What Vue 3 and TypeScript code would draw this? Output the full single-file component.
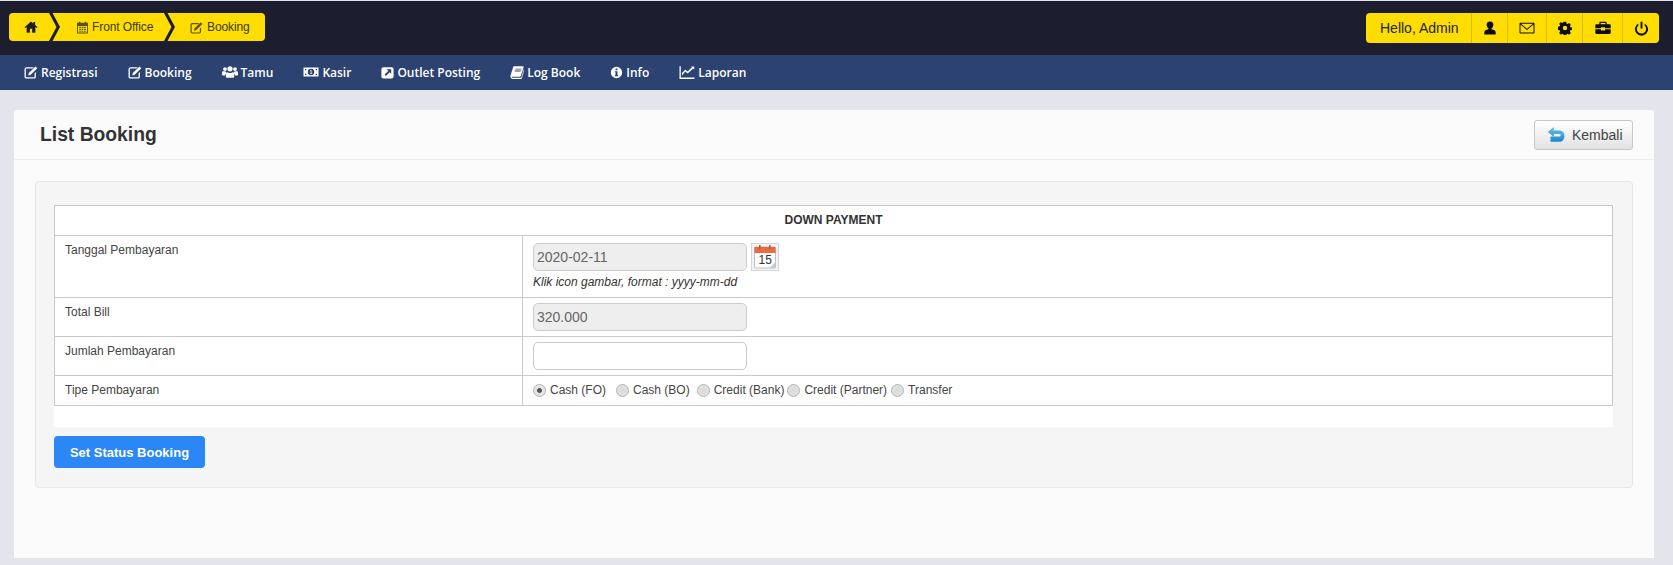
<script setup lang="ts">
const icons: Record<string, string> = {
  edit: 'M3 2.5h8.2L9.7 4H3a.9.9 0 0 0-.9.9v8.2c0 .5.4.9.9.9h8.2c.5 0 .9-.4.9-.9V9.4l1.5-1.5v5.4A2.2 2.2 0 0 1 11.4 15.5H2.8A2.2 2.2 0 0 1 .6 13.3V4.7A2.2 2.2 0 0 1 2.8 2.5zM13.2 1.6l2 2-7.6 7.6-2.8.7.7-2.8z',
  users: 'M8 2.2a2.6 2.6 0 1 1 0 5.2 2.6 2.6 0 0 1 0-5.2zM3 3.2a1.9 1.9 0 1 1 0 3.8 1.9 1.9 0 0 1 0-3.8zM13 3.2a1.9 1.9 0 1 1 0 3.8 1.9 1.9 0 0 1 0-3.8zM0 8.2c0-.6.6-.9 1.4-.9h2c.2.9.6 1.4 1.2 1.8-.9.4-1.4 1.2-1.6 2.5H1.2C.4 11.6 0 11 0 10.2zM16 8.2c0-.6-.6-.9-1.4-.9h-2c-.2.9-.6 1.4-1.2 1.8.9.4 1.4 1.2 1.6 2.5h1.8c.8 0 1.2-.6 1.2-1.4zM5.6 8.2c.7.6 1.5.9 2.4.9s1.7-.3 2.4-.9c1.3.1 1.8 1 1.8 2.6v1.6c0 .9-.5 1.4-1.4 1.4H5.2c-.9 0-1.4-.5-1.4-1.4v-1.6c0-1.6.5-2.5 1.8-2.6z',
  money: 'M.5 3.5h15v9H.5zM2 5v6h1.6A1.8 1.8 0 0 0 2 9.4V6.6A1.8 1.8 0 0 0 3.6 5zM12.4 5A1.8 1.8 0 0 0 14 6.6v2.8a1.8 1.8 0 0 0-1.6 1.6H14V5zM8 4.8a3.2 3.2 0 1 0 0 6.4 3.2 3.2 0 0 0 0-6.4zM7 6.2h1.5v3.2h.8v.7H7v-.7h.7V7.1H7z',
  link: 'M3 1.5h10A2.5 2.5 0 0 1 15.5 4v9a2.5 2.5 0 0 1-2.5 2.5H3A2.5 2.5 0 0 1 .5 13V4A2.5 2.5 0 0 1 3 1.5zM7 4l2 2-4.6 4.6 1.6 1.6 4.6-4.6 2 2V4z',
  book: 'M4.5 1.5h10.3c.7 0 .9.6.7 1.2l-3 9.6c-.3.8-.8 1.2-1.6 1.2H2.6c-.6 0-.8.6-.4.9.2.2.5.2.9.2h9.1c.4 0 .6-.2.8-.6l3-9.6c.4.3.5.8.3 1.4l-2.9 9.6c-.2.8-.9 1.2-1.7 1.2H2.9C1.4 15.3.3 14.2.5 12.6l.1-.9 3-9c.1-.7.4-1.2.9-1.2zM6 4.2v1h6.8l.3-1zM5.4 6.4v1h6.8l.3-1z',
  info: 'M8 1a7 7 0 1 1 0 14A7 7 0 0 1 8 1zM6.8 3v2.2h2.4V3zM6 6.4v1.4h.8v3.4H6v1.4h4v-1.4h-.8V6.4z',
  chart: 'M.5 2.2h1.3v11.4h13.7v1.3H.5zM3 11.6V9l3.2-3.4 2.4 2L13 3.2 12 2.4h3.2v3.2l-1.1-1.2-5.4 5.2-2.4-2L3 11.6z',
  calendar: 'M3.5.8h1.8v1.5h5.4V.8h1.8v1.5h2.3v13H1.2v-13h2.3zM2.4 6v8.1h11.2V6zM4 7h2v1.6H4zm3 0h2v1.6H7zm3 0h2v1.6h-2zM4 9.5h2v1.6H4zm3 0h2v1.6H7zm3 0h2v1.6h-2zM4 12h2v1.3H4zm3 0h2v1.3H7zm3 0h2v1.3h-2z',
  user: 'M8 .6a3.8 3.8 0 0 1 3.8 4c0 1.6-.8 3.2-2.1 4l.2.8c2.8.6 4.6 1.6 4.6 3.5v2.5H1.5v-2.5c0-1.9 1.8-2.9 4.6-3.5l.2-.8c-1.3-.8-2.1-2.4-2.1-4A3.8 3.8 0 0 1 8 .6z',
  mail: 'M1.6 2.8h12.8c.6 0 1.1.5 1.1 1.1v8.6c0 .6-.5 1.1-1.1 1.1H1.6c-.6 0-1.1-.5-1.1-1.1V3.9c0-.6.5-1.1 1.1-1.1zM1.5 4.6v7.8c0 .1.1.2.2.2h12.6c.1 0 .2-.1.2-.2V4.6L8 10zM2 3.8 8 8.8l6-5z',
  cog: 'M6.6.8h2.8l.4 2 1.2.5 1.7-1.1 2 2-1.1 1.7.5 1.2 2 .4v2.8l-2 .4-.5 1.2 1.1 1.7-2 2-1.7-1.1-1.2.5-.4 2H6.6l-.4-2-1.2-.5-1.7 1.1-2-2 1.1-1.7-.5-1.2-2-.4V6.5l2-.4.5-1.2-1.1-1.7 2-2L4.6 2.3l1.2-.5zM8 5.5a2.5 2.5 0 1 0 0 5 2.5 2.5 0 0 0 0-5z',
  case: 'M5.5 1.8h5c.7 0 1.2.5 1.2 1.2v1.3h2.8c.7 0 1.2.5 1.2 1.2v2.7H10v-1H6v1H.3V5.5c0-.7.5-1.2 1.2-1.2h2.8V3c0-.7.5-1.2 1.2-1.2zM5.6 3.1v1.2h4.8V3.1zM.3 9.2H6v1.2h4V9.2h5.7v3.6c0 .7-.5 1.2-1.2 1.2h-13c-.7 0-1.2-.5-1.2-1.2z',
  power: 'M7 .8h2v7.2H7zM4.6 2.6v2.2a5 5 0 1 0 6.8 0V2.6a7 7 0 1 1-6.8 0z'
}

const menu = [
  { label: 'Registrasi', icon: 'edit', w: 14 },
  { label: 'Booking', icon: 'edit', w: 14 },
  { label: 'Tamu', icon: 'users', w: 16 },
  { label: 'Kasir', icon: 'money', w: 16 },
  { label: 'Outlet Posting', icon: 'link', w: 13 },
  { label: 'Log Book', icon: 'book', w: 14 },
  { label: 'Info', icon: 'info', w: 13 },
  { label: 'Laporan', icon: 'chart', w: 16 }
]

const tools = [
  { icon: 'user', w: 36, s: 14 },
  { icon: 'mail', w: 39, s: 16 },
  { icon: 'cog', w: 36, s: 14 },
  { icon: 'case', w: 40, s: 16 },
  { icon: 'power', w: 37, s: 15 }
]

const payTypes = ['Cash (FO)', 'Cash (BO)', 'Credit (Bank)', 'Credit (Partner)', 'Transfer']
</script>

<template>
  <div class="page">
    <header class="top">
      <nav class="crumbs">
        <a class="crumb first">
          <svg class="home" viewBox="0 0 16 16" width="14" height="14"><path d="M8 1.6.6 8.2l.9 1L3 7.9v6.6h3.7V10h2.6v4.5H13V7.9l1.5 1.3.9-1-2.7-2.4V2.4h-2v1.6z" /></svg>
        </a>
        <i class="chev"></i>
        <a class="crumb second">
          <svg viewBox="0 0 16 16" width="13" height="13"><path :d="icons.calendar" fill-rule="evenodd" /></svg>
          Front Office
        </a>
        <i class="chev"></i>
        <a class="crumb third">
          <svg viewBox="0 0 16 16" width="13" height="13"><path :d="icons.edit" fill-rule="evenodd" /></svg>
          Booking
        </a>
      </nav>
      <div class="tools">
        <span class="hello">Hello, Admin</span>
        <a v-for="t in tools" :key="t.icon" class="tool" :style="{ width: t.w + 'px' }">
          <svg viewBox="0 0 16 16" :width="t.s" :height="t.s"><path :d="icons[t.icon]" fill-rule="evenodd" /></svg>
        </a>
      </div>
    </header>

    <nav class="menu">
      <a v-for="m in menu" :key="m.label" class="menu-item">
        <svg viewBox="0 0 16 16" :width="m.w" :height="m.w"><path :d="icons[m.icon]" fill-rule="evenodd" /></svg>
        <span>{{ m.label }}</span>
      </a>
    </nav>

    <main class="panel">
      <div class="panel-head">
        <h1>List Booking</h1>
        <button class="back" type="button">
          <svg viewBox="0 0 18 18" width="18" height="18">
            <defs>
              <linearGradient id="backFill" x1="0" y1="0" x2="0" y2="1">
                <stop offset="0" stop-color="#6cc0ee" />
                <stop offset="1" stop-color="#1d86cf" />
              </linearGradient>
            </defs>
            <path d="M6.8 1 .8 5.9l6 4.9V8h5.4c1 0 1.5.5 1.5 1.2s-.5 1.3-1.5 1.3H3.5v5.3h8.9c3 0 5-2.3 5-5.8 0-3.3-2-5.6-5-5.6H6.8z" fill="url(#backFill)" />
          </svg>
          Kembali
        </button>
      </div>

      <div class="panel-body">
        <section class="well">
          <div class="sheet">
            <table>
              <colgroup>
                <col class="col-label" />
                <col />
              </colgroup>
              <tbody>
                <tr class="r-head"><th colspan="2">DOWN PAYMENT</th></tr>
                <tr class="r-date">
                  <td class="lbl">Tanggal Pembayaran</td>
                  <td class="val">
                    <div class="date-row">
                      <input class="field" type="text" value="2020-02-11" disabled />
                      <span class="cal">
                        <svg viewBox="0 0 26 26" width="26" height="26">
                          <rect x="2.5" y="3" width="21" height="21" rx="1" fill="#fdfdfd" stroke="#b9c2c9" />
                          <rect x="2.5" y="3" width="21" height="6" fill="#ee6a3c" />
                          <rect x="7" y="1" width="1.6" height="4" fill="#8a6a5a" />
                          <rect x="17" y="1" width="1.6" height="4" fill="#8a6a5a" />
                          <text x="6.5" y="20" class="cal-num">15</text>
                          <path d="M23.5 18v6h-6z" fill="#c3ccd2" />
                        </svg>
                      </span>
                    </div>
                    <em class="hint">Klik icon gambar, format : yyyy-mm-dd</em>
                  </td>
                </tr>
                <tr class="r-input">
                  <td class="lbl">Total Bill</td>
                  <td class="val"><input class="field" type="text" value="320.000" disabled /></td>
                </tr>
                <tr class="r-input">
                  <td class="lbl">Jumlah Pembayaran</td>
                  <td class="val"><input class="field" type="text" /></td>
                </tr>
                <tr class="r-radio">
                  <td class="lbl">Tipe Pembayaran</td>
                  <td class="val">
                    <div class="radios">
                      <label v-for="(p, i) in payTypes" :key="p" class="radio">
                        <input type="radio" name="tipe" :checked="i === 0" />
                        <span>{{ p }}</span>
                      </label>
                    </div>
                  </td>
                </tr>
              </tbody>
            </table>
          </div>
          <button class="submit" type="button">Set Status Booking</button>
        </section>
      </div>
    </main>
  </div>
</template>

<style>
html, body { margin: 0; background: #e4e4ec; }
</style>

<style scoped>
.page {
  width: 1673px;
  height: 565px;
  overflow: hidden;
  padding-top: 1px;
  background: #e4e4ec;
  font-family: "Liberation Sans", Arial, sans-serif;
  color: #333;
  box-sizing: border-box;
}
.top {
  height: 54px;
  background: #1c1d2e;
  display: flex;
  justify-content: space-between;
  padding: 12px 14px 0 9px;
  box-sizing: border-box;
}
.crumbs {
  display: flex;
  height: 28px;
  background: #ffdd00;
  border-radius: 4px;
  align-items: center;
  font-size: 12px;
  color: #3d3a12;
  letter-spacing: -0.1px;
}
.crumb { display: flex; align-items: center; gap: 3px; }
.crumb svg { fill: #57531c; }
.first { width: 40px; justify-content: center; padding-left: 4px; box-sizing: border-box; }
.first .home { fill: #1c1d2e; }
.second { width: 104px; padding-left: 16px; box-sizing: border-box; }
.third { width: 90px; padding-left: 15px; box-sizing: border-box; gap: 4px; }
.chev {
  width: 11px;
  height: 28px;
  flex: none;
  background: #1c1d2e;
  clip-path: polygon(0 0, 3.5px 0, 11px 50%, 3.5px 100%, 0 100%, 7.5px 50%);
}
.tools {
  display: flex;
  height: 30px;
  background: #ffdd00;
  border-radius: 4px;
  align-items: stretch;
}
.hello {
  width: 105px;
  box-sizing: border-box;
  padding-left: 14px;
  font-size: 14px;
  line-height: 30px;
  color: #1c1d2e;
}
.tool {
  display: flex;
  align-items: center;
  justify-content: center;
  border-left: 1px solid #d9bc08;
  box-sizing: border-box;
}
.tool svg { fill: #0d0d15; }
.menu {
  height: 35px;
  background: #2c4270;
  display: flex;
  align-items: center;
  padding-left: 9px;
  box-sizing: border-box;
  border-bottom: 1px solid #2a3f6a;
}
.menu-item {
  display: flex;
  align-items: center;
  gap: 3px;
  padding: 0 15px;
  color: #fff;
  font-family: "Open Sans", sans-serif;
  font-size: 12px;
  font-weight: 600;
}
.menu-item svg { fill: #fff; }
.panel {
  margin: 20px 19px 0 14px;
  height: 448px;
  background: #fbfbfb;
  border-radius: 3px 3px 0 0;
  display: flex;
  flex-direction: column;
}
.panel-head {
  height: 50px;
  box-sizing: border-box;
  display: flex;
  align-items: center;
  justify-content: space-between;
  padding: 0 21px 0 26px;
  border-bottom: 1px solid #eeeeee;
}
h1 {
  margin: 0;
  font-size: 19.3px;
  font-weight: 700;
  color: #333;
}
.back {
  width: 99px;
  height: 30px;
  margin-top: 1px;
  display: flex;
  align-items: center;
  gap: 7px;
  padding: 0 0 0 12px;
  box-sizing: border-box;
  font: 14px "Liberation Sans", Arial, sans-serif;
  color: #444;
  background: linear-gradient(#ffffff, #e2e2e2);
  border: 1px solid #c8c8c8;
  border-radius: 3px;
}
.panel-body { padding: 21px 21px 0; }
.well {
  height: 307px;
  box-sizing: border-box;
  background: #f5f5f5;
  border: 1px solid #e6e6e6;
  border-radius: 4px;
  padding: 23px 19px 0 18px;
}
.sheet {
  background: #fff;
  height: 222px;
}
table {
  width: 100%;
  border-collapse: collapse;
  table-layout: fixed;
  font-size: 12px;
  background: #fff;
}
.col-label { width: 468px; }
th, td { border: 1px solid #c9c9c9; padding: 0; vertical-align: top; }
.r-head th {
  height: 30px;
  box-sizing: border-box;
  font-size: 12px;
  font-weight: 700;
  color: #333;
  line-height: 29px;
}
.lbl { padding: 7px 10px 0; color: #444; }
.val { padding: 7px 10px 0; color: #444; }
.r-date td { height: 62px; box-sizing: border-box; }
.r-input td { height: 39px; box-sizing: border-box; padding-top: 5px; }
.r-input .lbl { padding-top: 7px; }
.r-radio td { height: 30px; box-sizing: border-box; padding-top: 7px; }
.date-row { display: flex; align-items: center; gap: 4px; }
.field {
  display: block;
  width: 214px;
  height: 28px;
  box-sizing: border-box;
  border: 1px solid #ccc;
  border-radius: 5px;
  padding: 0 3px;
  font: 14px "Liberation Sans", Arial, sans-serif;
  color: #666;
  background: #fff;
  margin: 0;
  opacity: 1;
}
.field:disabled { background: #eeeeee; -webkit-text-fill-color: #666; }
.cal {
  width: 28px;
  height: 28px;
  box-sizing: border-box;
  border: 1px solid #d5d5d5;
  background: #f4f4f4;
  display: block;
}
.cal svg { display: block; }
.cal-num { font: 12px "Liberation Sans", Arial, sans-serif; fill: #333; }
.hint {
  display: block;
  margin-top: 4px;
  font-size: 12px;
  line-height: 14px;
  color: #333;
}
.radios { display: flex; align-items: center; height: 14px; }
.radio { display: flex; align-items: center; gap: 4px; line-height: 14px; }
.radio:nth-child(1) { margin-right: 10px; }
.radio:nth-child(2) { margin-right: 7px; }
.radio:nth-child(3) { margin-right: 3px; }
.radio:nth-child(4) { margin-right: 4px; }
.radio input {
  appearance: none;
  -webkit-appearance: none;
  width: 13px;
  height: 13px;
  margin: 0;
  border-radius: 50%;
  border: 1px solid #b4b4b4;
  background: radial-gradient(circle at 50% 50%, #d8d8d8 0, #e2e2e2 60%, #cfcfcf 100%);
  box-sizing: border-box;
}
.radio input:checked {
  background: radial-gradient(circle, #555 0, #555 27%, #e4e4e4 34%, #e4e4e4 100%);
}
.submit {
  display: block;
  margin-top: 9px;
  width: 151px;
  height: 32px;
  border: none;
  border-radius: 4px;
  background: #2a87f5;
  color: #fff;
  font: 700 13px "Liberation Sans", Arial, sans-serif;
  padding: 0;
}
</style>
